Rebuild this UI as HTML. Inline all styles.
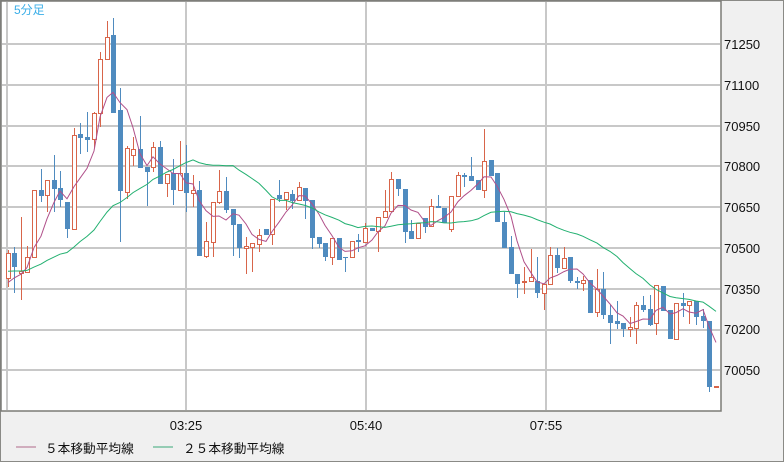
<!DOCTYPE html>
<html><head><meta charset="utf-8"><style>
html,body{margin:0;padding:0}
body{width:784px;height:462px;background:#f0f0f0;position:relative;overflow:hidden;font-family:"Liberation Sans","Noto Sans CJK JP",sans-serif}
#frame{position:absolute;left:0;top:0;width:782px;height:460px;border:1px solid #8a8a86}
svg{position:absolute;left:0;top:0}
</style></head><body>
<div id="frame"></div>
<svg id="s" width="784" height="462" xmlns="http://www.w3.org/2000/svg">
<rect x="1" y="1" width="720" height="410" fill="#fff" stroke="#7a7a76" stroke-width="1.5"/>
<g id="grid" stroke="#c8c8c8" stroke-width="2"></g>
<g id="c"></g>
<g font-size="13" fill="#111" font-family="Liberation Sans, sans-serif">
<text x="724" y="49">71250</text><text x="724" y="90">71100</text><text x="724" y="131">70950</text><text x="724" y="171">70800</text><text x="724" y="212">70650</text><text x="724" y="253">70500</text><text x="724" y="294">70350</text><text x="724" y="334">70200</text><text x="724" y="375">70050</text>
<text x="186" y="430" text-anchor="middle">03:25</text><text x="366" y="430" text-anchor="middle">05:40</text><text x="546" y="430" text-anchor="middle">07:55</text>
</g>
<text x="14" y="14" font-size="12" fill="#3aaee8" font-family="Liberation Sans, Noto Sans CJK JP, sans-serif">5分足</text>
<line x1="16" y1="447" x2="36" y2="447" stroke="#b06a8a" stroke-width="1"/>
<text x="45" y="453" font-size="12.7" fill="#111" font-family="Liberation Sans, Noto Sans CJK JP, sans-serif">５本移動平均線</text>
<line x1="153" y1="447" x2="173" y2="447" stroke="#3aa878" stroke-width="1"/>
<text x="183" y="453" font-size="12.7" fill="#111" font-family="Liberation Sans, Noto Sans CJK JP, sans-serif">２５本移動平均線</text>
</svg>
<script>
var NS="http://www.w3.org/2000/svg";
var g=document.getElementById('grid');
function ln(p,x1,y1,x2,y2,c,w){var l=document.createElementNS(NS,'line');l.setAttribute('x1',x1);l.setAttribute('y1',y1);l.setAttribute('x2',x2);l.setAttribute('y2',y2);if(c)l.setAttribute('stroke',c);if(w)l.setAttribute('stroke-width',w);p.appendChild(l);}
for(var i=0;i<9;i++){var y=Math.round(44+40.8*i);ln(g,2,y,720,y);}
[7,186,366,546].forEach(function(x){ln(g,x,2,x,410);});
var D=[[8,253,278,250,287,1],[14,253,267,247,293,0],[21,271,273,217,300,1],[27,257,272,246,273,1],[34,190,257,190,257,1],[41,190,196,169,202,0],[47,180,195,180,212,1],[54,180,189,155,212,0],[60,188,200,171,207,0],[67,202,229,202,238,0],[74,135,229,128,230,1],[80,134,138,123,154,0],[87,137,140,112,152,0],[94,113,139,112,148,1],[100,59,113,52,127,1],[107,37,59,21,59,1],[113,35,113,18,113,0],[120,110,191,88,242,0],[127,148,192,146,199,1],[133,149,155,137,166,1],[140,149,168,116,168,0],[147,167,172,167,206,0],[153,147,167,142,172,1],[160,147,184,141,184,0],[167,174,183,174,197,1],[173,173,190,159,205,0],[180,173,190,141,190,1],[186,173,193,145,212,0],[193,190,193,175,207,1],[199,190,256,181,256,0],[206,241,256,222,258,1],[213,202,242,202,257,1],[219,191,202,170,204,1],[226,191,210,177,213,0],[233,209,225,209,256,0],[239,224,248,224,258,0],[246,246,248,237,274,1],[252,243,247,243,272,1],[259,235,244,229,252,1],[266,229,235,229,235,0],[272,199,234,199,245,1],[279,195,199,180,202,0],[286,192,199,192,210,1],[292,194,201,190,209,0],[299,187,200,182,200,1],[305,188,201,188,219,0],[312,200,238,200,249,0],[319,237,244,237,248,0],[325,243,257,243,261,0],[332,238,257,238,265,1],[339,238,260,238,260,0],[345,257,258,257,272,0],[352,241,257,241,257,1],[358,240,242,234,252,0],[365,228,242,223,242,1],[372,228,231,228,231,0],[378,217,231,217,252,1],[385,211,217,190,217,1],[391,179,211,172,211,1],[398,179,189,179,196,0],[405,189,232,189,243,0],[411,231,239,220,239,0],[418,223,238,223,238,1],[425,218,227,218,233,0],[431,206,226,199,226,1],[438,206,208,195,208,0],[444,208,223,208,223,0],[451,196,229,196,232,1],[458,175,196,172,196,1],[464,175,177,173,187,0],[471,176,181,157,181,0],[478,180,190,180,190,0],[484,161,190,129,198,1],[491,160,176,160,176,0],[497,173,222,173,222,0],[504,222,248,212,248,0],[511,247,274,236,274,0],[517,274,284,274,298,0],[524,281,281,267,294,1],[531,277,281,249,281,1],[537,281,293,257,298,0],[544,284,293,284,310,1],[550,255,284,247,284,1],[557,255,268,248,273,0],[564,258,268,247,268,1],[570,257,281,257,283,0],[577,281,283,277,289,0],[583,280,283,276,291,1],[590,280,313,280,313,0],[597,289,312,269,317,1],[603,289,315,272,319,0],[610,315,323,305,344,0],[617,321,324,301,329,0],[623,323,329,323,337,0],[630,327,329,317,337,1],[636,305,328,302,344,1],[643,305,310,296,312,0],[650,309,325,295,326,0],[656,285,323,285,335,1],[663,286,311,286,311,0],[670,310,339,310,339,0],[676,303,339,303,339,1],[683,303,306,293,317,0],[689,301,305,301,324,1],[696,301,317,301,325,0],[703,316,321,309,328,0],[709,321,387,321,392,0],[716,386,386,386,386,1]];
var c=document.getElementById('c');
var OR="#d8654a",BL="#4f8bbf";
var closes=[];
D.forEach(function(d){
 var x=d[0],col=d[5]?OR:BL;
 closes.push(d[5]?d[1]:d[2]);
 if(d[3]<d[4]) ln(c,x+0.5,d[3],x+0.5,d[4],col,1);
 var r=document.createElementNS(NS,'rect');
 if(d[5]){r.setAttribute('x',x-1.5);r.setAttribute('y',d[1]+0.5);r.setAttribute('width',4);r.setAttribute('height',Math.max(1,d[2]-d[1]));r.setAttribute('fill','#fff');r.setAttribute('stroke',col);r.setAttribute('stroke-width',1);}
 else{r.setAttribute('x',x-2);r.setAttribute('y',d[1]);r.setAttribute('width',5);r.setAttribute('height',Math.max(1,d[2]-d[1]));r.setAttribute('fill',col);}
 c.appendChild(r);
});
function ma(n,col,pre){
 var pts=[];
 for(var i=0;i<closes.length;i++){
  var s=0,k=0;
  for(var j=i;j>i-n;j--){s+=(j>=0?closes[j]:pre);k++;}
  pts.push(D[i][0]+','+(s/k).toFixed(1));
 }
 var p=document.createElementNS(NS,'polyline');p.setAttribute('points',pts.join(' '));p.setAttribute('fill','none');p.setAttribute('stroke',col);p.setAttribute('stroke-width',1);c.appendChild(p);
}
ma(5,"#b0508a",290);
ma(25,"#22b070",272);
</script>
</body></html>
